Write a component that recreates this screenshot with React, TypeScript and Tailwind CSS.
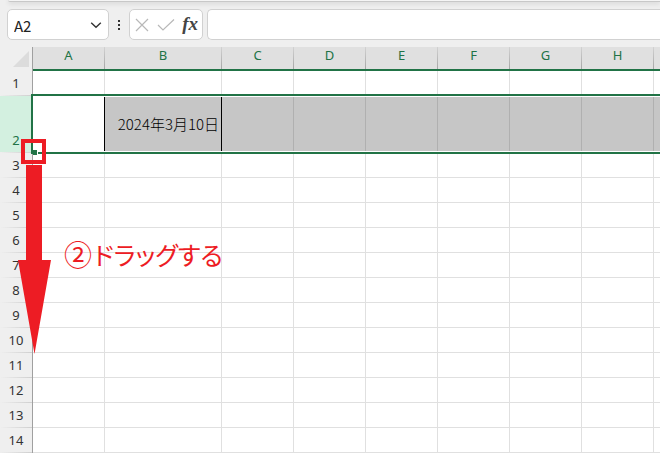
const columns = ["A", "B", "C", "D", "E", "F", "G", "H"];
const rows = [3, 4, 5, 6, 7, 8, 9, 10, 11, 12, 13, 14];
const all = [...columns, ""];

function RowHeader({ n, selected = false }: { n: number; selected?: boolean }) {
  return (
    <th
      scope="row"
      className={`border-r border-r-[#a0a0a0] p-0 align-bottom font-normal ${
        selected ? "bg-[#d3f0e0] text-[#217346]" : "bg-[#efefef] text-[#333333]"
      }`}
    >
      <div className="pb-[3px] text-[13px] leading-[18px]">{n}</div>
      <div className="h-px bg-linear-to-r from-[#efefef] to-[#cfcfcf]" />
    </th>
  );
}

function EmptyRow({ n }: { n: number }) {
  return (
    <tr className="h-[25px]">
      <RowHeader n={n} />
      {all.map((c, i) => (
        <td key={i} className="border-r border-b border-[#e0e0e0] p-0 last:border-r-0" />
      ))}
    </tr>
  );
}

function FormulaBar() {
  return (
    <div className="flex h-[31px] items-stretch pl-[7px]">
      <div className="flex w-[102px] items-center rounded-[5px] border border-[#d1d1d1] bg-white">
        <input
          aria-label="名前ボックス"
          defaultValue="A2"
          className="w-0 flex-1 bg-transparent pt-0.5 pl-1.5 font-['Noto_Sans_CJK_JP',sans-serif] text-[15px] leading-5 text-[#222222] outline-none"
        />
        <button aria-label="名前の一覧" className="mr-1 flex size-4 items-center justify-center">
          <svg width="12" height="8" viewBox="0 0 12 8" fill="none" stroke="#333333" strokeWidth="1.4">
            <path d="M1.2 1.7 6 6.3l4.8-4.6" />
          </svg>
        </button>
      </div>
      <div className="flex w-5 items-center justify-center">
        <svg width="4" height="12" viewBox="0 0 4 12" fill="#333333">
          <path d="M1 1h2v2H1zM1 5h2v2H1zM1 9h2v2H1z" />
        </svg>
      </div>
      <div className="flex w-[74px] items-center justify-between rounded-[5px] border border-[#d1d1d1] bg-white pr-1 pl-[5px]">
        <button aria-label="キャンセル">
          <svg width="14" height="14" viewBox="0 0 14 14" fill="none" stroke="#b8b8b8" strokeWidth="1.2">
            <path d="M1 1l12 12M13 1 1 13" />
          </svg>
        </button>
        <button aria-label="入力">
          <svg width="18" height="14" viewBox="0 0 18 14" fill="none" stroke="#b8b8b8" strokeWidth="1.2">
            <path d="M1 7l5 5L17 1.5" />
          </svg>
        </button>
        <button
          aria-label="関数の挿入"
          className="pb-0.5 font-['Liberation_Serif',serif] text-[19px] leading-5 font-bold text-[#444444] italic"
        >
          fx
        </button>
      </div>
      <input
        aria-label="数式バー"
        className="ml-1 min-w-0 flex-1 rounded-l-[5px] border border-r-0 border-[#d1d1d1] bg-white px-2 outline-none"
      />
    </div>
  );
}

export default function App() {
  return (
    <div className="min-h-screen overflow-hidden bg-[#efefef] font-['Noto_Sans','Noto_Sans_CJK_JP',sans-serif]">
      <div className="h-[9px] pl-2">
        <div className="h-0.5 rounded-bl-[4px] border-b border-[#c8c8c8] bg-[#f5f5f5] shadow-[0_1px_5px_#00000030]" />
      </div>
      <FormulaBar />
      <div className="relative mt-[7px]">
        <table className="w-full table-fixed border-separate border-spacing-0 bg-white">
          <colgroup>
            <col className="w-[33px]" />
            <col className="w-[72px]" />
            <col className="w-[117px]" />
            {columns.slice(2).map((c) => (
              <col key={c} className="w-[72px]" />
            ))}
            <col />
          </colgroup>
          <thead>
            <tr className="h-6">
              <td className="border-r border-r-[#a0a0a0] bg-[#efefef] p-0 align-top">
                <svg className="mt-1 ml-[13px]" width="16" height="16" viewBox="0 0 16 16" fill="#dcdcdc">
                  <path d="M16 0v16H0z" />
                </svg>
              </td>
              {all.map((c, i) => (
                <th
                  key={i}
                  scope="col"
                  className="group border-b-2 border-[#217346] bg-[#e0e0e0] p-0 text-[13px] leading-4 font-normal text-[#217346]"
                >
                  <div className="flex h-[22px]">
                    <span className="flex-1">{c}</span>
                    <span className="w-px bg-linear-to-b from-[#d2d2d2] to-[#a6a6a6] group-last:hidden" />
                  </div>
                </th>
              ))}
            </tr>
          </thead>
          <tbody>
            <EmptyRow n={1} />
            <tr className="h-[57px]">
              <RowHeader n={2} selected />
              <td className="border-b border-[#e0e0e0] px-0 py-px">
                <div className="h-[54px] border-r border-black" />
              </td>
              <td className="border-b border-[#e0e0e0] px-0 py-px">
                <div className="flex h-[54px] items-center justify-end border-r border-black bg-[#c6c6c6] pr-[2px] font-['Noto_Sans_CJK_JP',sans-serif] text-[15px] leading-5 font-light whitespace-nowrap text-black">
                  2024年3月10日
                </div>
              </td>
              {all.slice(2).map((c, i) => (
                <td key={i} className="group border-b border-[#e0e0e0] px-0 py-px">
                  <div className="h-[54px] border-r border-[#b0b0b0] bg-[#c6c6c6] group-last:border-r-0" />
                </td>
              ))}
            </tr>
            {rows.map((n) => (
              <EmptyRow key={n} n={n} />
            ))}
          </tbody>
        </table>

        {/* selection outline of row 2 with its fill handle */}
        <div className="pointer-events-none absolute top-[47px] right-0 left-[31px] h-[60px] border-2 border-r-0 border-[#217346]" />
        <div className="absolute top-[102px] left-[33px] h-[7px] w-[5px] border border-l-0 border-white bg-[#217346]" />

        {/* drag annotation */}
        <div className="absolute top-[92px] left-[21px] size-[25px] border-4 border-[#ed1c24]" />
        <svg
          className="absolute top-[118px] left-[18px]"
          width="34"
          height="190"
          viewBox="0 0 34 190"
          fill="#ed1c24"
        >
          <path d="M8 0h16v95h9L16.500 189 0 95h8z" />
        </svg>
        <p className="absolute top-[187px] left-[64px] flex items-center gap-0.5 font-['Noto_Sans_CJK_JP',sans-serif] text-[25px] leading-10 whitespace-nowrap text-[#ed1c24] [font-feature-settings:'palt']">
          <span className="text-[28px]">②</span>
          <span>ドラッグする</span>
        </p>
      </div>
    </div>
  );
}
